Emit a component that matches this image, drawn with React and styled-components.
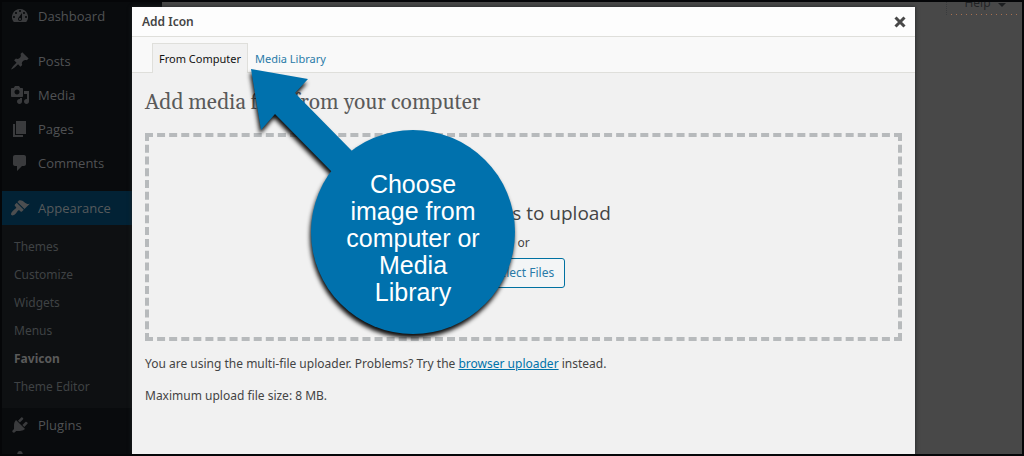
import React from "react";
import styled, { createGlobalStyle } from "styled-components";

const GlobalStyle = createGlobalStyle`
  *, *::before, *::after { box-sizing: border-box; }
  body {
    margin: 0;
    background: #050608;
    font-family: "Noto Sans", "Open Sans", sans-serif;
    font-size: 12px;
    line-height: 20px;
    color: #444;
  }
`;

const Screen = styled.div`
  position: relative;
  display: flex;
  height: 100vh;
  overflow: hidden;
  border: 2px solid #050608;
  background: #484848;
`;

const Sidebar = styled.nav`
  flex: none;
  width: 160px;
  background: #090b0d;
`;

const Menu = styled.ul`
  margin: -3px 0 0;
  padding: 0;
  list-style: none;
`;

const MenuItem = styled.li`
  margin-top: ${(p) => (p.$spaced ? "11px" : "0")};
`;

const MenuLink = styled.a`
  display: flex;
  align-items: center;
  gap: 8px;
  height: 34px;
  padding-left: 8px;
  font-family: "Open Sans", "Noto Sans", sans-serif;
  font-size: 13px;
  color: ${(p) => (p.$current ? "#565a5c" : "#505254")};
  background: ${(p) => (p.$current ? "#022235" : "transparent")};
  text-decoration: none;

  svg {
    flex: none;
    width: 20px;
    height: 20px;
    fill: ${(p) => (p.$current ? "#4c4e50" : "#3a3b3d")};
  }
`;

const Submenu = styled.ul`
  margin: 0;
  padding: 8px 0 7px;
  list-style: none;
  background: #0e1012;
`;

const SubmenuLink = styled.a`
  display: block;
  padding: 4px 12px;
  color: ${(p) => (p.$current ? "#5a5a5a" : "#3f4244")};
  font-weight: ${(p) => (p.$current ? 700 : 400)};
  text-decoration: none;
`;

const Page = styled.main`
  display: flex;
  flex: 1;
  justify-content: flex-end;
  align-items: flex-start;
`;

const HelpButton = styled.button`
  display: flex;
  justify-content: center;
  align-items: flex-end;
  gap: 8px;
  width: 72px;
  height: 13px;
  margin-right: 4px;
  padding: 0 0 2px 6px;
  border: 0;
  border-left: 1px dotted #393b3d;
  background: repeating-linear-gradient(90deg, #a87050 0 1px, transparent 1px 5px) left 4px bottom / 100% 1px no-repeat;
  font: 12px/20px "Open Sans", sans-serif;
  color: #202224;

  svg {
    width: 8px;
    height: 10px;
    fill: #1c1e20;
  }
`;

const Modal = styled.section`
  position: absolute;
  inset: 5px 107px 0 130px;
  display: flex;
  flex-direction: column;
  background: #f1f1f1;
  box-shadow: 0 0 4px #202325;
`;

const ModalHeader = styled.header`
  display: flex;
  align-items: center;
  justify-content: space-between;
  height: 30px;
  padding: 0 9px 0 10px;
  background: #fdfdfd;
  border-bottom: 1px solid #dfdfdb;
`;

const ModalTitle = styled.h1`
  margin: 0;
  font-size: 12px;
  font-weight: 600;
  color: #444;
`;

const CloseButton = styled.button`
  display: flex;
  padding: 0;
  border: 0;
  background: none;

  svg {
    width: 12px;
    height: 12px;
    stroke: #484848;
    stroke-width: 3;
  }
`;

const TabBar = styled.div`
  display: flex;
  align-items: flex-end;
  height: 36px;
  padding-left: 20px;
  background: #f9f9f9;
  border-bottom: 1px solid #dfdfdb;
`;

const Tab = styled.button`
  height: 30px;
  margin-bottom: -1px;
  padding: 0 6px;
  border: 1px solid ${(p) => (p.$active ? "#dfdfdb" : "transparent")};
  border-bottom: 0;
  background: ${(p) => (p.$active ? "#f1f1f1" : "none")};
  color: ${(p) => (p.$active ? "#111" : "#2a7ba8")};
  font: 11px/20px "Noto Sans", sans-serif;
`;

const ModalBody = styled.div`
  padding: 16px 13px;
`;

const Heading = styled.h2`
  margin: 0 0 16px;
  font: 400 21px/28px Gelasio, Georgia, "Liberation Serif", serif;
  color: #5a5a5a;
`;

const DropZone = styled.div`
  display: flex;
  flex-direction: column;
  align-items: center;
  justify-content: center;
  height: 208px;
  border: 4px dashed #b7babc;
`;

const DropTitle = styled.p`
  margin: 0;
  padding-top: 12px;
  font-family: "Open Sans", "Noto Sans", sans-serif;
  font-size: 19px;
  line-height: 28px;
  color: #444;
`;

const DropText = styled.p`
  margin: 6px 0 5px;
`;

const SelectButton = styled.button`
  height: 30px;
  padding: 0 10px;
  border: 1px solid #0071a1;
  border-radius: 3px;
  background: #f3f5f6;
  color: #2a7ba8;
  font: 12px/20px "Noto Sans", sans-serif;
`;

const Note = styled.p`
  margin: 12px 0 0;

  &:first-of-type { margin-top: 13px; }

  a { color: #0073aa; }
`;

const Callout = styled.aside`
  position: absolute;
  left: 113px;
  top: 54px;
  width: 280px;
  height: 290px;

  svg {
    position: absolute;
    inset: 0;
    overflow: visible;
    fill: #0071ad;
    filter: drop-shadow(-1px 4px 2px rgba(0, 0, 0, 0.95));
  }
`;

const CalloutText = styled.p`
  position: absolute;
  left: 66px;
  top: 69px;
  width: 204px;
  height: 204px;
  margin: 0;
  padding: 13px 28px 0;
  display: flex;
  align-items: center;
  text-align: center;
  font: 25px/27px "Liberation Sans", Arial, sans-serif;
  color: #fff;
`;

const icons = {
  dashboard:
    "M3.76 16h12.48A7.998 7.998 0 0 0 10 3a7.998 7.998 0 0 0-6.24 13zM10 4c.55 0 1 .45 1 1s-.45 1-1 1-1-.45-1-1 .45-1 1-1zM6 6c.55 0 1 .45 1 1s-.45 1-1 1-1-.45-1-1 .45-1 1-1zm8 0c.55 0 1 .45 1 1s-.45 1-1 1-1-.45-1-1 .45-1 1-1zm-5.37 5.55L12 7v6c0 1.1-.9 2-2 2s-2-.9-2-2c0-.57.24-1.08.63-1.45zM4 10c.55 0 1 .45 1 1s-.45 1-1 1-1-.45-1-1 .45-1 1-1zm12 0c.55 0 1 .45 1 1s-.45 1-1 1-1-.45-1-1 .45-1 1-1zm-5 3c0-.55-.45-1-1-1s-1 .45-1 1 .45 1 1 1 1-.45 1-1z",
  posts:
    "M10.44 3.02l1.82-1.82 6.36 6.35-1.83 1.82c-1.05-.68-2.48-.57-3.41.36l-.75.75c-.92.93-1.04 2.35-.35 3.41l-1.83 1.82-2.41-2.41-2.8 2.79c-.42.42-3.38 2.71-3.8 2.29s1.86-3.39 2.28-3.81l2.79-2.79L4.1 9.36l1.83-1.82c1.05.69 2.48.57 3.4-.36l.75-.75c.93-.92 1.05-2.35.36-3.41z",
  media:
    "M13 11V4c0-.55-.45-1-1-1h-1.67L9 1H5L3.67 3H2c-.55 0-1 .45-1 1v7c0 .55.45 1 1 1h10c.55 0 1-.45 1-1zM7 4.5c1.38 0 2.5 1.12 2.5 2.5S8.38 9.5 7 9.5 4.5 8.38 4.5 7 5.62 4.5 7 4.5zM14 6h5v10.5c0 1.38-1.12 2.5-2.5 2.5S14 17.88 14 16.5s1.12-2.5 2.5-2.5c.17 0 .34.02.5.05V9h-3V6zm-4 8.05V13h2v3.5c0 1.38-1.12 2.5-2.5 2.5S7 17.88 7 16.5 8.12 14 9.5 14c.17 0 .34.02.5.05z",
  pages: "M6 15V2h10v13H6zm-1 1h8v2H3V5h2v11z",
  comments:
    "M5 2h9c1.1 0 2 .9 2 2v7c0 1.1-.9 2-2 2h-2l-5 5v-5H5c-1.1 0-2-.9-2-2V4c0-1.1.9-2 2-2z",
  appearance:
    "M14.48 11.06L7.41 3.99l1.5-1.5c.5-.56 2.3-.47 3.51.32 1.21.8 1.43 1.28 2.91 2.1 1.18.64 2.45 1.26 4.45.85zm-.71.71L6.7 4.7 4.93 6.47c-.39.39-.39 1.02 0 1.41l1.06 1.06c.39.39.39 1.03 0 1.42-.6.6-1.43 1.11-2.21 1.69-.35.26-.7.53-1.01.84C1.43 14.23.4 16.08 1.4 17.07c.99 1 2.84-.03 4.18-1.36.31-.31.58-.66.85-1.02.57-.78 1.08-1.61 1.69-2.21.39-.39 1.02-.39 1.41 0l1.06 1.06c.39.39 1.02.39 1.41 0z",
  plugins:
    "M13.11 4.36L9.87 7.6 8 5.73l3.24-3.24c.35-.34 1.05-.2 1.56.32.52.51.66 1.21.31 1.55zm-8 1.77l.91-1.12 9.01 9.01-1.19.84c-.71.71-2.63 1.16-3.82 1.16H6.14L4.9 17.26c-.59.59-1.54.59-2.12 0-.59-.58-.59-1.53 0-2.12l1.24-1.24v-3.88c0-1.13.4-3.19 1.09-3.89zm7.26 3.97l3.24-3.24c.34-.35 1.04-.21 1.55.31.52.51.66 1.21.31 1.55l-3.24 3.25z",
  users:
    "M10 9.25c-2.27 0-2.73-3.44-2.73-3.44C7 4.02 7.82 2 9.97 2c2.16 0 2.98 2.02 2.71 3.81 0 0-.41 3.44-2.68 3.44zm0 2.57L12.72 10c2.39 0 4.52 2.33 4.52 4.53v2.49s-3.65 1.13-7.24 1.13c-3.65 0-7.24-1.13-7.24-1.13v-2.49c0-2.25 1.94-4.48 4.47-4.48z",
};

const menu = [
  { label: "Dashboard", icon: "dashboard" },
  { label: "Posts", icon: "posts", spaced: true },
  { label: "Media", icon: "media" },
  { label: "Pages", icon: "pages" },
  { label: "Comments", icon: "comments" },
  {
    label: "Appearance",
    icon: "appearance",
    spaced: true,
    current: true,
    children: ["Themes", "Customize", "Widgets", "Menus", "Favicon", "Theme Editor"],
  },
  { label: "Plugins", icon: "plugins" },
  { label: "", icon: "users" },
];

function AdminMenu() {
  return (
    <Sidebar aria-label="Admin menu">
      <Menu>
        {menu.map((item) => (
          <MenuItem key={item.icon} $spaced={item.spaced}>
            <MenuLink href="#" $current={item.current} aria-label={item.label || item.icon}>
              <svg viewBox="0 0 20 20" aria-hidden="true">
                <path d={icons[item.icon]} />
              </svg>
              {item.label}
            </MenuLink>
            {item.children && (
              <Submenu>
                {item.children.map((name) => (
                  <li key={name}>
                    <SubmenuLink href="#" $current={name === "Favicon"}>
                      {name}
                    </SubmenuLink>
                  </li>
                ))}
              </Submenu>
            )}
          </MenuItem>
        ))}
      </Menu>
    </Sidebar>
  );
}

export default function App() {
  return (
    <Screen>
      <GlobalStyle />
      <AdminMenu />
      <Page>
        <HelpButton>
          Help
          <svg viewBox="0 0 8 10" aria-hidden="true">
            <path d="M0 0h8L4 4z" />
          </svg>
        </HelpButton>
      </Page>
      <Modal role="dialog" aria-labelledby="dialog-title">
        <ModalHeader>
          <ModalTitle id="dialog-title">Add Icon</ModalTitle>
          <CloseButton aria-label="Close">
            <svg viewBox="0 0 12 12" aria-hidden="true">
              <path d="M1.500 1.500l9 9M10.500 1.500l-9 9" />
            </svg>
          </CloseButton>
        </ModalHeader>
        <TabBar role="tablist">
          <Tab role="tab" aria-selected="true" $active>
            From Computer
          </Tab>
          <Tab role="tab" aria-selected="false">
            Media Library
          </Tab>
        </TabBar>
        <ModalBody>
          <Heading>Add media files from your computer</Heading>
          <DropZone>
            <DropTitle>Drop files to upload</DropTitle>
            <DropText>or</DropText>
            <SelectButton>Select Files</SelectButton>
          </DropZone>
          <Note>
            You are using the multi-file uploader. Problems? Try the{" "}
            <a href="#">browser uploader</a> instead.
          </Note>
          <Note>Maximum upload file size: 8 MB.</Note>
        </ModalBody>
        <Callout>
          <svg width="280" height="290" viewBox="0 0 280 290" aria-hidden="true">
            <path d="M6 8L63 18L50 32L107 90L87 111L30 53L16 69z" />
            <circle cx="168" cy="171" r="102" />
          </svg>
          <CalloutText>Choose image from computer or Media Library</CalloutText>
        </Callout>
      </Modal>
    </Screen>
  );
}
